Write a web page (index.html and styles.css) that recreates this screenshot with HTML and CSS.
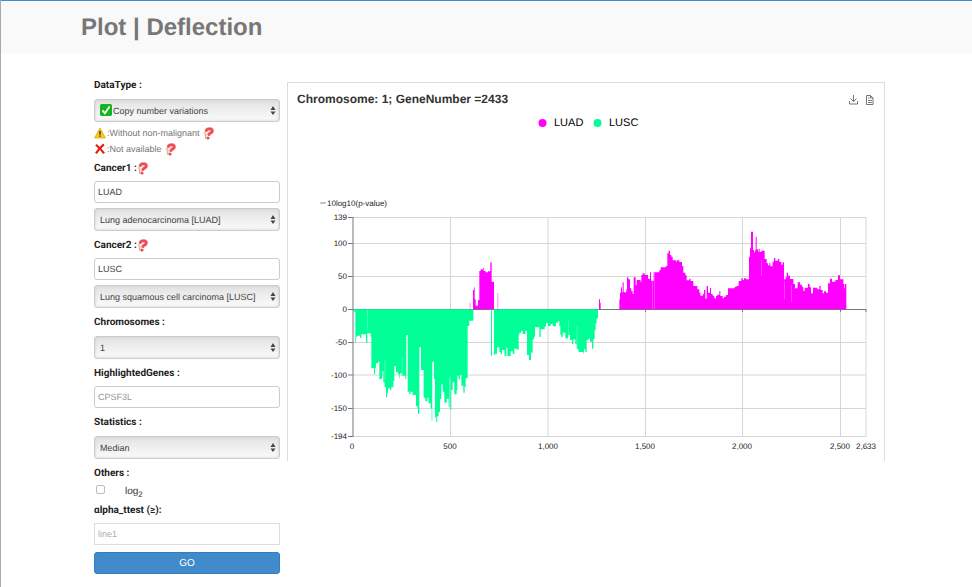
FILE: index.html
```html
<!DOCTYPE html>
<html lang="en">
<head>
<meta charset="utf-8">
<meta name="viewport" content="width=device-width, initial-scale=1">
<title>Plot | Deflection</title>
<link rel="stylesheet" href="styles.css">
</head>
<body>
<svg class="defs" aria-hidden="true">
  <symbol id="arrows" viewBox="0 0 6 10"><path fill="#444" d="M3 0 5.500 4H.5zM3 9 .5 5.500h5z"/></symbol>
  <symbol id="help" viewBox="0 0 12 13">
    <path fill="none" stroke="#f7c9cb" stroke-width="4" d="M3.500 4.500C3 1.500 9 .8 9.300 3.400 9.500 6 5.500 5.500 5.200 8.500"/>
    <path fill="none" stroke="#ee4b55" stroke-width="2.600" stroke-linecap="round" d="M3.300 3.800C3.800 1.200 9.500 1 9.300 4 9 6.200 6.200 6 5.900 7.800"/>
    <circle cx="5" cy="11" r="1.600" fill="#ee4b55"/>
    <path fill="none" stroke="#ddb48b" stroke-width="1.500" d="M1.700 5.500 2.600 7.500 2.800 12"/>
    <circle cx="1.900" cy="6" r="1.300" fill="#e9c9a8"/>
  </symbol>
</svg>
<header class="page-header"><h1>Plot | Deflection</h1></header>
<main class="content">
  <form class="controls">
    <div class="field">
      <label for="datatype">DataType :</label>
      <div class="select has-icon">
        <svg class="check" viewBox="0 0 11 11"><rect width="11" height="11" rx="1.500" fill="#12b51e"/><path d="M2.200 5.800 4.500 8.500 8.800 2.300" fill="none" stroke="#fff" stroke-width="1.700"/></svg>
        <select id="datatype"><option>Copy number variations</option></select>
        <svg class="arrows"><use href="#arrows"/></svg>
      </div>
      <div class="notes">
        <p><svg class="mark" viewBox="0 0 11 11"><path d="M5.500 1 10.500 10H.5z" fill="#fcc91d" stroke="#e3ae13" stroke-width=".8" stroke-linejoin="round"/><path d="M5.500 3.600V7M5.500 7.800v1.200" stroke="#333" stroke-width="1.300"/></svg><span>:Without non-malignant</span><svg class="help spaced"><use href="#help"/></svg></p>
        <p><svg class="mark" viewBox="0 0 11 11"><path d="M1.800 1.600C4.500 4 7 6.500 9.300 9.500M9 1.300C6 4 3.800 6.500 1.800 9.500" fill="none" stroke="#e3200f" stroke-width="2"/></svg><span>:Not available</span><svg class="help spaced"><use href="#help"/></svg></p>
      </div>
    </div>
    <div class="field">
      <label for="cancer1">Cancer1 :<svg class="help"><use href="#help"/></svg></label>
      <input class="text" id="cancer1" type="text" value="LUAD">
      <div class="select">
        <select aria-label="Cancer1 type"><option>Lung adenocarcinoma [LUAD]</option></select>
        <svg class="arrows"><use href="#arrows"/></svg>
      </div>
    </div>
    <div class="field">
      <label for="cancer2">Cancer2 :<svg class="help"><use href="#help"/></svg></label>
      <input class="text" id="cancer2" type="text" value="LUSC">
      <div class="select">
        <select aria-label="Cancer2 type"><option>Lung squamous cell carcinoma [LUSC]</option></select>
        <svg class="arrows"><use href="#arrows"/></svg>
      </div>
    </div>
    <div class="field">
      <label for="chromosomes">Chromosomes :</label>
      <div class="select">
        <select id="chromosomes"><option>1</option></select>
        <svg class="arrows"><use href="#arrows"/></svg>
      </div>
    </div>
    <div class="field">
      <label for="genes">HighlightedGenes :</label>
      <input class="text" id="genes" type="text" placeholder="CPSF3L">
    </div>
    <div class="field">
      <label for="statistics">Statistics :</label>
      <div class="select">
        <select id="statistics"><option>Median</option></select>
        <svg class="arrows"><use href="#arrows"/></svg>
      </div>
    </div>
    <div class="field">
      <strong class="label">Others :</strong>
      <div class="option"><input id="log2" type="checkbox"><label for="log2"><span>log<sub>2</sub></span></label></div>
    </div>
    <div class="field">
      <label for="alpha">αlpha_ttest (≥):</label>
      <input class="text plain" id="alpha" type="text" placeholder="line1">
    </div>
    <button class="go" type="button">GO</button>
  </form>

  <section class="chart">
    <svg viewBox="288 83 596 378" role="img" aria-label="Deflection plot of LUAD and LUSC">
      <text class="chart-title" x="297" y="103">Chromosome: 1; GeneNumber =2433</text>
      <g class="tools">
        <path d="M853.500 95v6.500M850.500 98.500l3 3 3-3M849.500 101v3h8v-3"/>
        <path d="M866.500 95.500h4l2.500 2.500v6.500h-6.500zM870.500 95.500v2.500h2.500M868 98h1.500M868 100.500h4M868 102.500h4"/>
      </g>
      <g class="legend">
        <circle class="luad" cx="542.500" cy="123" r="4"/><text x="554" y="126">LUAD</text>
        <circle class="lusc" cx="597.500" cy="123" r="4"/><text x="609" y="126">LUSC</text>
      </g>
      <path class="grid" d="M353 217.500H866M353 243.500H866M353 276.500H866M353 342.500H866M353 375H866M353 408.500H866M353 436.500H866M450.500 217V437M548 217V437M645.500 217V437M742.500 217V437M840.500 217V437M866 217V437"/>
      <path class="axis" d="M353 217V437M348 309.500H866M348 217.500H353M348 243.500H353M348 276.500H353M348 342.500H353M348 375H353M348 408.500H353M348 436.500H353M450.500 309v3M548 309v3M645.500 309v3M742.500 309v3M840.500 309v3M866 309v3"/>

      <g class="lusc">
        <path transform="translate(320 210) scale(.33333)" d="M100 298V305H106V400H108V380H112V377H120V384H124V373H138V398H142V370H152V380H154V475H162V493H165V473H168V460H174V455H178V508H184V505H187V483H190V517H194V532H198V562H201V550H204V535H210V540H214V532H220V512H223V468H228V487H234V492H238V505H240V490H245V497H256V507H259V375H263V545H268V552H272V545H278V555H288V588H292V595H294V612H298V412H303V480H311V563H316V574H322V563H326V580H332V595H335V632H337V455H342V507H345V622H349V637H352V618H356V606H360V567H364V523H368V545H373V578H380V566H386V592H389V500H391V600H394V540H398V516H403V553H410V540H412V497H416V508H420V495H424V527H430V548H434V530H437V505H443V348H448V332H460V298Z"/>
        <path transform="translate(480 210) scale(.33333)" d="M33 298V437H36V298H42V435H45V431H51V412H58V426H62V433H66V420H74V438H79V413H82V438H92V424H98V432H103V416H112V420H116V375H118V368H124V362H128V372H136V362H141V435H147V450H153V428H158V388H162V380H165V352H178V382H182V358H194V350H198V340H204V348H212V342H218V349H228V338H234V334H238V348H241V375H244V382H248V368H256V385H265V374H270V390H276V402H280V388H286V402H290V418H296V426H310V430H312V418H316V426H320V390H325V386H330V395H336V416H340V388H344V360H347V340H350V325H354V298Z"/>
      </g>
      <g class="luad">
        <path transform="translate(320 210) scale(.33333)" d="M459 298V240H462V232H464V268H467V287H474V270H478V183H482V178H489V173H491V183H497V187H504V184H511V157H515V215H522V298Z"/>
        <path transform="translate(320 210) scale(.33333)" opacity=".45" d="M449 298V278H452V298ZM532 298V249H535V298Z"/>
        <path transform="translate(480 210) scale(.33333)" d="M357 298V268H360V278H362V298Z"/>
        <path transform="translate(610 210) scale(.33333)" d="M28 298V268H30V248H33V232H36V247H38V217H41V247H49V238H51V202H55V208H60V235H64V244H68V252H71V202H77V226H80V210H92V216H94V195H98V190H104V195H114V206H120V187H123V212H131V187H148V180H152V172H168V168H172V130H176V122H180V135H184V140H188V151H198V155H200V151H208V156H216V168H220V188H226V196H230V211H238V206H242V213H250V228H262V238H268V248H271V257H279V252H282V240H286V266H290V228H294V248H300V234H303V252H308V257H313V265H318V258H322V254H328V243H331V258H338V265H342V260H348V255H354V235H374V230H380V228H386V213H394V205H398V210H402V205H408V208H418V298Z"/>
        <path transform="translate(740 210) scale(.33333)" d="M27 298V140H30V115H33V65H39V120H42V128H44V122H47V80H50V118H54V125H56V116H59V126H64V122H74V147H80V160H84V166H88V158H91V169H98V155H102V144H106V152H114V147H118V156H124V164H128V157H132V208H137V202H140V188H144V197H150V207H160V222H165V235H173V217H180V224H186V230H190V243H194V233H204V222H209V232H213V250H219V233H232V238H238V228H242V240H248V250H252V244H258V248H264V220H270V206H276V215H286V210H294V196H300V208H310V222H313V235H315V222H319V298Z"/>
      </g>
      <path class="streak" d="M367.500 310V331M385 360V380M402.500 358V377M407 335V390M420.500 350V412M432.500 362V420M568.500 320V334M577 326V350"/>
      <path class="streak" d="M652.500 281V309M654.500 270V309M784.500 281V299M761.500 260V276M791.500 285V302"/>

      <g class="labels">
        <text class="unit" x="319" y="206">－10log10(p-value)</text>
        <g text-anchor="end">
          <text x="347" y="220">139</text><text x="347" y="246">100</text><text x="347" y="279">50</text><text x="347" y="312">0</text>
          <text x="347" y="345">-50</text><text x="347" y="378">-100</text><text x="347" y="411">-150</text><text x="347" y="439">-194</text>
        </g>
        <g text-anchor="middle">
          <text x="352" y="449">0</text><text x="450" y="449">500</text><text x="548" y="449">1,000</text><text x="645" y="449">1,500</text>
          <text x="742" y="449">2,000</text><text x="840" y="449">2,500</text><text x="866" y="449">2,633</text>
        </g>
      </g>
    </svg>
  </section>
</main>
</body>
</html>
```
FILE: styles.css
```css
* { box-sizing: border-box; }
html { min-height: 100%; border-left: 1px solid #aaa; background: #fff; }
body { margin: 0; border-top: 1px solid #428bca; font: 10px/14px "Liberation Sans", Arial, sans-serif; color: #333; text-rendering: geometricPrecision; }
.defs { position: absolute; width: 0; height: 0; }

.page-header { padding: 12px 80px 11px; background: #f9f9f9; }
h1 { margin: 0; font-size: 24px; line-height: 29px; color: #777; }

.content { display: grid; grid-template-columns: 186px minmax(0, 1fr); column-gap: 7px; align-items: start; padding: 0 87px 12px 93px; }
.controls { display: flex; flex-direction: column; gap: 7px; padding-top: 25px; }
.field { display: flex; flex-direction: column; }
.field > label, .label { display: flex; align-items: center; height: 14px; padding-top: 1px; font-family: Roboto, "Liberation Sans", sans-serif; font-weight: bold; color: #222; }

input, select, button { text-rendering: inherit; }
.text { width: 100%; height: 22px; margin-top: 6px; padding: 0 3px; border: 1px solid #ccc; border-radius: 3px; background: #fff; font: inherit; font-size: 9px; color: #444; }
.text::placeholder { color: #999; opacity: 1; }
.text.plain { border-color: #ddd; border-radius: 0; }
.text.plain::placeholder { color: #aaa; }

.select { position: relative; height: 23px; margin-top: 7px; }
.text + .select { margin-top: 5px; }
.select select { display: block; width: 100%; height: 100%; padding: 0 10px 0 5px; border: 1px solid #ccc; border-radius: 3px; background: linear-gradient(#e2e2e2, #fbfbfb); box-shadow: inset 0 0 3px #ccc; appearance: none; font: inherit; font-size: 9px; color: #444; }
.select.has-icon select { padding-left: 18px; }
.check { position: absolute; left: 6px; top: 5px; width: 12px; height: 12px; }
.arrows { position: absolute; right: 4px; top: 7px; width: 6px; height: 10px; pointer-events: none; }

.notes { margin: 3px 0 -3px; font-size: 9px; color: #777; }
.notes p { display: flex; align-items: center; height: 16px; margin: 0; }
.mark { width: 12px; height: 12px; margin-right: 1px; }
.help { width: 12px; height: 13px; }
.help.spaced { margin-left: 3px; }

.option { display: flex; align-items: center; height: 14px; margin-top: 2px; }
.option input { width: 9px; height: 9px; margin: 0 20px 0 2px; border: 1px solid #bbb; border-radius: 2px; appearance: none; background: #fff; }
.option input:checked { background: #428bca; }
.option label { padding-top: 5px; }
.option sub { font-size: 8px; line-height: 0; }

.go { height: 22px; padding: 1px 6px 0; border: 1px solid #357ebd; border-radius: 3px; background: #428bca; font: inherit; color: #fff; }

.chart { margin-top: 29px; border: 1px solid #ddd; border-bottom: 0; }
.chart svg { display: block; width: 100%; height: auto; }
.chart-title { font-size: 12px; font-weight: bold; fill: #333; }
.legend text { font-size: 11px; fill: #000; }
.luad { fill: #f0f; }
.lusc { fill: #00ff97; }
.tools { fill: none; stroke: #777; stroke-width: 1; }
.grid { fill: none; stroke: #d6d6d6; }
.axis { fill: none; stroke: #777; }
.streak { fill: none; stroke: #fff; stroke-opacity: .25; }
.labels text { font-size: 8px; fill: #222; }
.labels .unit { font-family: "Liberation Sans", "Noto Sans CJK SC", sans-serif; }
```
